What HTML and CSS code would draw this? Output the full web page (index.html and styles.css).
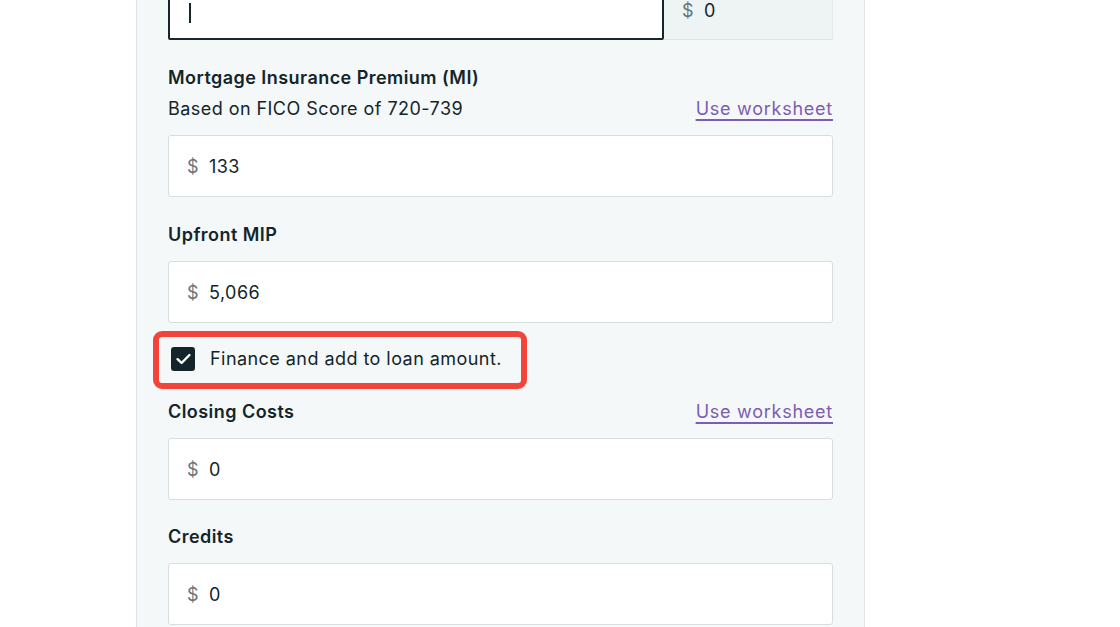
FILE: index.html
```html
<!DOCTYPE html>
<html lang="en">
<head>
<meta charset="utf-8">
<title>Loan details</title>
<link rel="stylesheet" href="styles.css">
</head>
<body>
<div class="page">
  <div class="panel">
    <div class="split-row">
      <div class="input input-focused"><span class="caret"></span></div>
      <div class="readonly"><span class="cur">$</span><span class="val">0</span></div>
    </div>

    <div class="group group-mi">
      <div class="label">Mortgage Insurance Premium (MI)</div>
      <div class="label-row sub">
        <span class="note">Based on FICO Score of 720-739</span>
        <a class="link" href="#">Use worksheet</a>
      </div>
      <div class="input"><span class="cur">$</span><span class="val">133</span></div>
    </div>

    <div class="group">
      <div class="label">Upfront MIP</div>
      <div class="input"><span class="cur">$</span><span class="val">5,066</span></div>
    </div>

    <div class="check-row">
      <span class="checkbox">
        <svg width="15" height="12" viewBox="0 0 15 12"><path d="M1.6 6.2 L5.6 10 L13.4 2" fill="none" stroke="#fff" stroke-width="2.4" stroke-linecap="round" stroke-linejoin="round"/></svg>
      </span>
      <span class="check-text">Finance and add to loan amount.</span>
      <span class="highlight"></span>
    </div>

    <div class="group group-after-check">
      <div class="label-row">
        <span class="label">Closing Costs</span>
        <a class="link" href="#">Use worksheet</a>
      </div>
      <div class="input"><span class="cur">$</span><span class="val">0</span></div>
    </div>

    <div class="group group-last">
      <div class="label">Credits</div>
      <div class="input"><span class="cur">$</span><span class="val">0</span></div>
    </div>
  </div>
</div>
</body>
</html>
```

FILE: styles.css
```css
html, body {
  margin: 0;
  padding: 0;
  background: #ffffff;
  height: 100%;
  overflow: hidden;
}
body {
  font-family: Inter, "Noto Sans", "Liberation Sans", sans-serif;
  font-size: 18px;
  letter-spacing: 0.45px;
  color: #13252b;
}
.page {
  display: flex;
  padding-left: 136px;
}
.panel {
  width: 665px;
  padding: 0 31px 0 31px;
  background: #f4f8f8;
  border-left: 1px solid #dfe5e5;
  border-right: 1px solid #dfe5e5;
  min-height: 700px;
}
.split-row {
  display: flex;
  height: 62px;
  margin-top: -22px;
}
.input {
  box-sizing: border-box;
  height: 62px;
  background: #ffffff;
  border: 1px solid #d6dede;
  border-radius: 3px;
  display: flex;
  align-items: center;
  padding-left: 18px;
}
.input-focused {
  flex: 1;
  border: 2px solid #16262b;
  border-radius: 2px;
  padding-left: 19px;
}
.caret {
  display: block;
  width: 1.5px;
  height: 20px;
  background: #16262b;
  margin-top: 8px;
}
.readonly {
  width: 169px;
  box-sizing: border-box;
  background: #eef4f4;
  border-bottom: 1px solid #dde5e5;
  border-right: 1px solid #e6ecec;
  display: flex;
  align-items: center;
  padding-left: 18px;
  padding-top: 3px;
}
.cur {
  color: #66747a;
  margin-right: 10px;
}
.val {
  color: #13252b;
}
.group {
  margin-top: 24px;
}
.group-mi {
  margin-top: 24px;
}
.label {
  font-weight: 600;
  line-height: 28px;
  display: block;
  margin-bottom: 12px;
}
.group-mi .label {
  margin-bottom: 3px;
}
.label-row {
  display: flex;
  justify-content: space-between;
  align-items: center;
  line-height: 28px;
  margin-bottom: 12px;
}
.label-row .label {
  margin-bottom: 0;
}
.note {
  color: #13252b;
}
.link {
  color: #7d5bb6;
  letter-spacing: 0.75px;
  text-decoration: underline;
  text-underline-offset: 4px;
  text-decoration-thickness: 1.5px;
}
.check-row {
  position: relative;
  display: inline-flex;
  align-items: center;
  height: 28px;
  margin-top: 22px;
  padding-left: 3px;
}
.checkbox {
  width: 24px;
  height: 24px;
  border-radius: 3px;
  background: #13242a;
  display: flex;
  align-items: center;
  justify-content: center;
  margin-right: 15px;
}
.check-text {
  line-height: 28px;
}
.group-after-check {
  margin-top: 25px;
}
.group-last {
  margin-top: 23px;
}
.highlight {
  position: absolute;
  left: -15px;
  top: -14px;
  width: 374px;
  height: 58px;
  box-sizing: border-box;
  border: 6px solid #f2443a;
  border-radius: 9px;
  pointer-events: none;
}
```
